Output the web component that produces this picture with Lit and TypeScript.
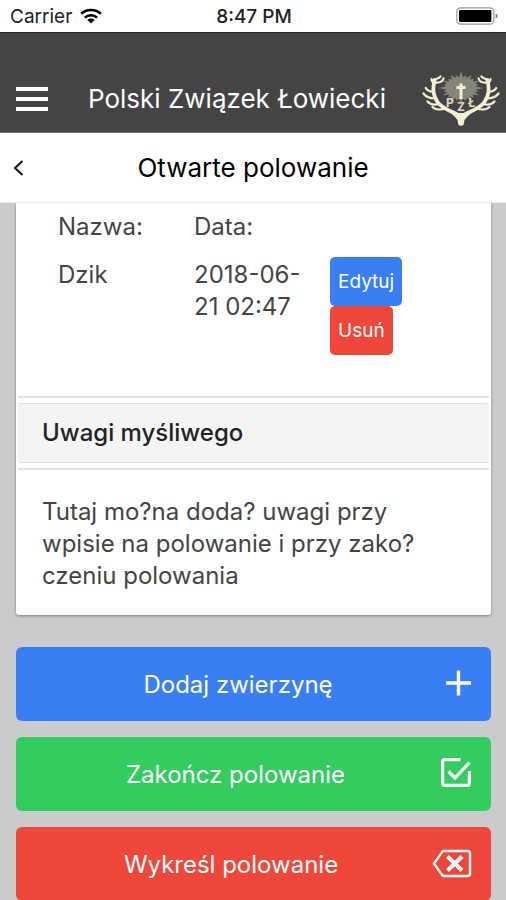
import { LitElement, html, svg, css } from "lit";
import { customElement } from "lit/decorators.js";

const wifiIcon = svg`<svg class="wifi" viewBox="0 0 22 16" aria-hidden="true">
  <g fill="none" stroke="#000" stroke-width="2.6">
    <path d="M1.2 5.8C6.6.8 15.4.8 20.8 5.8"/>
    <path d="M4.8 9.6c3.5-3.2 8.9-3.2 12.4 0"/>
  </g>
  <path d="M11 15.6 7.4 12c2-1.9 5.2-1.9 7.2 0z"/>
</svg>`;

const batteryIcon = svg`<svg class="battery" viewBox="0 0 42 18" aria-hidden="true">
  <rect x=".8" y=".8" width="37" height="16.4" rx="4" fill="#fff" stroke="#999" stroke-width="1.2"/>
  <rect x="3" y="3" width="32.4" height="12" rx="1" fill="#000"/>
  <path d="M39.6 6.5c2.4.8 2.4 4.2 0 5z" fill="#777"/>
</svg>`;

const antler = svg`<g fill="none" stroke="#f1f1d2" stroke-linecap="round" stroke-linejoin="round">
  <path stroke-width="3.8" d="M36 44C29 40 20 37.500 15.500 31C11 24.500 10.500 19 12.500 9"/>
  <path stroke-width="2.2" d="M12.500 12C10 11 9.500 9.500 9.500 8M12.500 9.500C13.500 7 17 8 18.500 5.500M13 11.500C17 12 20.500 10.500 21.500 7.500M11.500 21C7.500 20.500 5 19.500 3.800 17M13.500 27.500C8.500 27.500 4 26 1.500 22.500M17 33C13 34 8 33.500 5.500 30.500M23 37.500C19 39 13.500 39 10.500 36"/>
</g>`;

const burst = Array.from({ length: 48 }, (_, i) => {
  const a = (i * Math.PI) / 24;
  const r = i % 2 ? 15 : i % 12 === 0 ? 23 : i % 4 === 0 ? 21 : 18;
  return `${(39 + Math.cos(a) * r).toFixed(1)},${(17 + Math.sin(a) * r * 0.72).toFixed(1)}`;
}).join(" ");

const crest = svg`<svg class="crest" viewBox="0 0 78 56" role="img" aria-label="PZŁ">
  <polygon points=${burst} fill="#85857a"/>
  <path d="M39 12.500V28M34.500 16.500h9" fill="none" stroke="#f1f1d2" stroke-width="3"/>
  <g class="crest-text"><text x="24" y="36">P</text><text x="35" y="40">Z</text><text x="46" y="36">Ł</text></g>
  ${antler}
  <g transform="matrix(-1 0 0 1 78 0)">${antler}</g>
  <path d="M27 40l8 2h8l8-2-6 6-2.500 3-1 5q-2.500 1.500-5 0l-1-5-2.500-3z" fill="#f1f1d2"/>
</svg>`;

const addIcon = svg`<svg class="icon add" viewBox="0 0 28 32" aria-hidden="true">
  <path d="M14.500 2.500v25M2 15h25" fill="none" stroke="#fff" stroke-width="3.400"/>
</svg>`;

const checkIcon = svg`<svg class="icon check" viewBox="0 0 33 32" aria-hidden="true">
  <g fill="none" stroke="#fff" stroke-width="3.200">
    <path d="M21.500 1.600H6Q3.600 1.600 3.600 4v21q0 2.400 2.400 2.400h22q2.400 0 2.400-2.400V13" />
    <path d="M9.500 13.500l6.500 6.500L30.500 4.500"/>
  </g>
</svg>`;

const backspaceIcon = svg`<svg class="icon backspace" viewBox="0 0 42 32" aria-hidden="true">
  <path d="M14 3h23.500q2.500 0 2.500 2.500v20q0 2.500-2.500 2.500H14q-1 0-1.800-.9L4 15.500l8.200-11.600Q13 3 14 3z" fill="none" stroke="#fff" stroke-width="2.400"/>
  <path d="M17.500 8.500l14.500 14M32 8.500l-14.500 14" fill="none" stroke="#fff" stroke-width="4"/>
</svg>`;

@customElement("app-root")
export class AppRoot extends LitElement {
  static styles = css`
    :host {
      display: flex;
      flex-direction: column;
      height: 100vh;
      background: #cbcbcb;
      color: #000;
      font-family: Inter, "Liberation Sans", sans-serif;
    }
    * { box-sizing: border-box; }
    button { border: 0; margin: 0; font: inherit; color: #fff; cursor: pointer; }
    h1, h2, h3, p { margin: 0; font-weight: 400; }
    .status {
      flex: none;
      display: grid;
      grid-template-columns: 1fr auto 1fr;
      align-items: center;
      height: 32px;
      padding: 0 8px 0 10px;
      background: #fff;
      font-size: 19px;
      color: #222;
    }
    .carrier { display: flex; align-items: center; gap: 8px; }
    .time { font-weight: 500; }
    .wifi { width: 22px; height: 16px; }
    .battery { width: 42px; height: 18px; justify-self: end; }
    .header {
      flex: none;
      display: grid;
      grid-template-columns: 64px 1fr 78px;
      align-items: center;
      height: 101px;
      padding: 32px 6px 0 8px;
      border-top: 1px solid #222;
      border-bottom: 1px solid #777;
      background: #444;
      color: #fff;
    }
    .menu {
      display: flex;
      flex-direction: column;
      gap: 6px;
      justify-self: start;
      padding: 8px;
      background: none;
    }
    .bar { width: 32px; height: 4px; background: #fff; }
    .brand { padding: 0 0 0 16px; font-size: 26px; line-height: 32px; white-space: nowrap; }
    .crest { width: 78px; height: 56px; }
    .crest-text { font: 700 12px Inter, sans-serif; fill: #dedec2; }
    .titlebar {
      flex: none;
      display: grid;
      grid-template-columns: 48px 1fr 48px;
      align-items: center;
      height: 70px;
      background: #fff;
      border-bottom: 1px solid #eee;
    }
    .back { display: flex; padding: 8px 12px; background: none; }
    .chevron { width: 12px; height: 18px; }
    .title { text-align: center; font-size: 26px; line-height: 32px; }
    .content {
      flex: 1;
      min-height: 0;
      overflow-y: auto;
      scrollbar-width: none;
      padding: 0 15px 16px 16px;
    }
    .card {
      background: #fff;
      padding: 0 2px;
      border-radius: 0 0 3px 3px;
      box-shadow: 0 1px 3px rgba(0, 0, 0, 0.4);
      font-size: 24px;
      line-height: 32px;
      color: #444;
      margin-bottom: 32px;
    }
    .animals { height: 195px; border-bottom: 2px solid #e2e2e2; padding: 0 40px; }
    .table {
      width: 100%;
      border-collapse: collapse;
      table-layout: fixed;
    }
    th, td { padding: 8px 16px 8px 0; text-align: left; vertical-align: top; font-weight: 400; }
    .actions { padding: 6px 0 0; }
    .name { width: 136px; }
    .small {
      display: block;
      height: 49px;
      padding: 0 8px;
      border-radius: 5px;
      font-size: 19px;
    }
    .blue { background: #387ef5; }
    .green { background: #33cd5f; }
    .red { background: #ef473a; }
    .subhead {
      margin: 5px 0;
      padding: 13px 24px;
      border: 1px solid #ddd;
      border-width: 1px 0;
      border-radius: 3px;
      background: #f4f4f4;
      color: #222;
      font-size: 24px;
      font-weight: 500;
      line-height: 32px;
    }
    .notes { border-top: 2px solid #e2e2e2; padding: 26px 60px 23px 24px; }
    .stack { display: flex; flex-direction: column; gap: 16px; }
    .wide {
      display: flex;
      align-items: center;
      height: 74px;
      padding: 0 19px 0 16px;
      border-radius: 6px;
      font-size: 24px;
    }
    .label { flex: 1; text-align: center; }
    .icon { height: 32px; }
    .add { width: 28px; }
    .check { width: 33px; }
    .backspace { width: 42px; }
  `;

  render() {
    return html`
      <div class="status">
        <span class="carrier">Carrier ${wifiIcon}</span>
        <span class="time">8:47 PM</span>
        ${batteryIcon}
      </div>
      <header class="header">
        <button class="menu" aria-label="Menu">
          <span class="bar"></span><span class="bar"></span><span class="bar"></span>
        </button>
        <h1 class="brand">Polski Związek Łowiecki</h1>
        ${crest}
      </header>
      <div class="titlebar">
        <button class="back" aria-label="Wstecz">
          <svg class="chevron" viewBox="0 0 12 18" aria-hidden="true">
            <path d="M10.500 2L3 9l7.500 7" fill="none" stroke="#111" stroke-width="2"/>
          </svg>
        </button>
        <h2 class="title">Otwarte polowanie</h2>
      </div>
      <main class="content">
        <section class="card">
          <div class="animals">
            <table class="table">
              <thead>
                <tr><th class="name">Nazwa:</th><th class="name">Data:</th><th></th></tr>
              </thead>
              <tbody>
                <tr>
                  <td>Dzik</td>
                  <td>2018-06-21 02:47</td>
                  <td class="actions">
                    <button class="small blue">Edytuj</button>
                    <button class="small red">Usuń</button>
                  </td>
                </tr>
              </tbody>
            </table>
          </div>
          <h3 class="subhead">Uwagi myśliwego</h3>
          <p class="notes">Tutaj mo?na doda? uwagi przy wpisie na polowanie i przy zako?<wbr />czeniu polowania</p>
        </section>
        <div class="stack">
          <button class="wide blue"><span class="label">Dodaj zwierzynę</span>${addIcon}</button>
          <button class="wide green"><span class="label">Zakończ polowanie</span>${checkIcon}</button>
          <button class="wide red"><span class="label">Wykreśl polowanie</span>${backspaceIcon}</button>
        </div>
      </main>
    `;
  }
}
